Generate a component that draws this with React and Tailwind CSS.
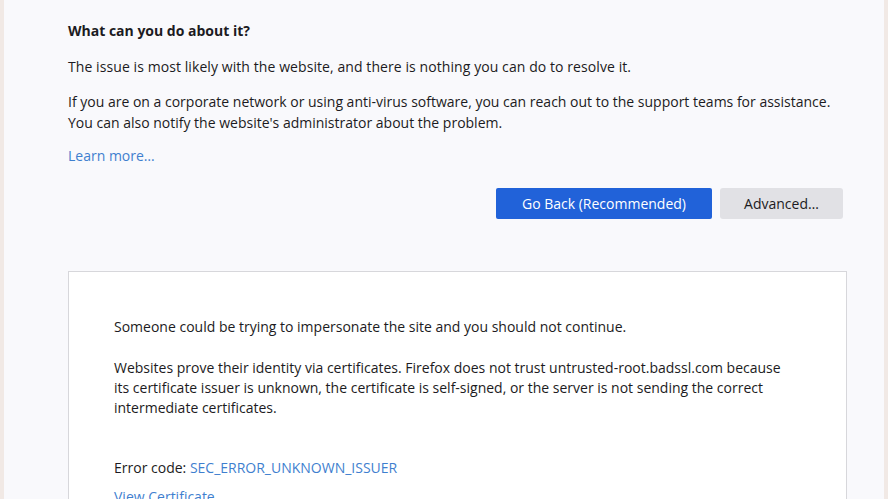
import React from "react";

function App() {
  return (
    <div
      className="flex h-[499px] w-[888px] overflow-hidden bg-[#f9f9fc] text-[#1c1b22]"
      style={{ fontFamily: '"Open Sans", "Noto Sans", sans-serif' }}
    >
      <div className="w-[4px] shrink-0 bg-[#f1e9e5]" />
      <div className="flex-1 pl-[64px] pr-[37px]">
        <div className="w-[779px]">
          <h3 className="mt-[21px] text-[14px] font-bold leading-[20px]">
            What can you do about it?
          </h3>
          <p className="mt-[16px] text-[14px] leading-[20px] tracking-[0.08px]">
            The issue is most likely with the website, and there is nothing you can do to resolve it.
          </p>
          <p className="mt-[14px] text-[14px] leading-[21px]">
            If you are on a corporate network or using anti-virus software, you can reach out to the support teams for assistance.
            <br />
            You can also notify the website's administrator about the problem.
          </p>
          <a href="#" className="mt-[13px] block w-fit text-[14px] leading-[20px] text-[#3f7fcf]">
            Learn more…
          </a>

          <div className="mt-[22px] flex justify-end gap-[8px] pr-[4px]">
            <button className="h-[31px] w-[216px] rounded-[2px] bg-[#2162d9] text-[14px] text-white">
              Go Back (Recommended)
            </button>
            <button className="h-[31px] w-[123px] rounded-[3px] bg-[#e1e1e5] text-[14px] text-[#1c1b22]">
              Advanced…
            </button>
          </div>

          <div className="mt-[52px] h-[260px] border border-[#d7d7db] bg-white pl-[45px] pt-[45px]">
            <p className="text-[14px] leading-[20px]">
              Someone could be trying to impersonate the site and you should not continue.
            </p>
            <p className="mt-[21px] text-[14px] leading-[20px]">
              Websites prove their identity via certificates. Firefox does not trust untrusted-root.badssl.com because
              <br />
              its certificate issuer is unknown, the certificate is self-signed, or the server is not sending the correct
              <br />
              intermediate certificates.
            </p>
            <p className="mt-[40px] text-[14px] leading-[20px]">
              Error code: <a href="#" className="text-[#3f7fcf]">SEC_ERROR_UNKNOWN_ISSUER</a>
            </p>
            <a href="#" className="mt-[9px] block w-fit text-[14px] leading-[20px] text-[#3f7fcf]">
              View Certificate
            </a>
          </div>
        </div>
      </div>
      <div className="w-[4px] shrink-0 bg-[#f1e9e5]" />
    </div>
  );
}

export default App;
